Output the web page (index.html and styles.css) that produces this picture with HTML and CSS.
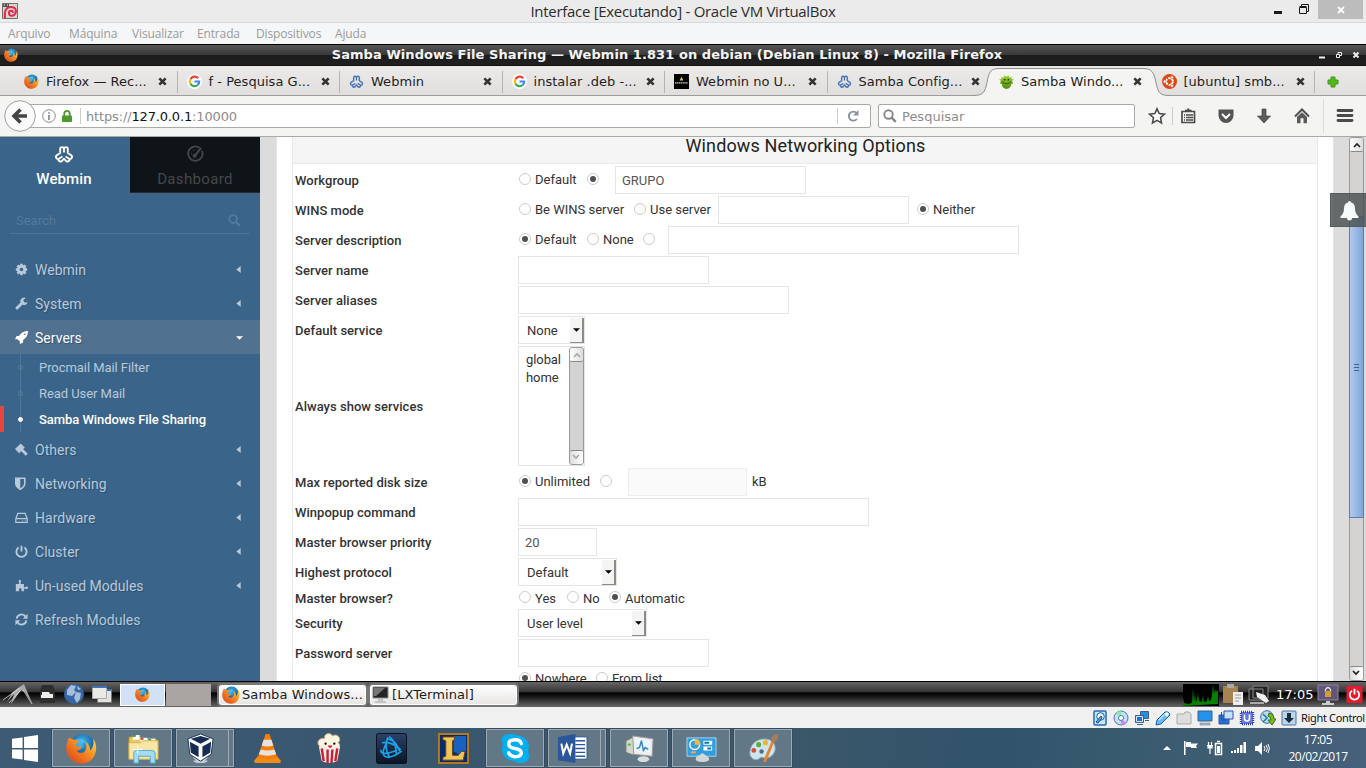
FILE: index.html
```html
<!DOCTYPE html>
<html lang="pt">
<head>
<meta charset="utf-8">
<title>Interface [Executando] - Oracle VM VirtualBox</title>
<link rel="stylesheet" href="styles.css">
</head>
<body>
<svg class="defs" width="0" height="0">
  <defs>
    <linearGradient id="orange" x1="1" y1="0" x2="0" y2="1"><stop offset="0" stop-color="#ffdc3e"/><stop offset=".5" stop-color="#f58220"/><stop offset="1" stop-color="#d53a1c"/></linearGradient>
    <radialGradient id="globe" cx=".5" cy=".3" r=".7"><stop offset="0" stop-color="#37b7ea"/><stop offset="1" stop-color="#10357e"/></radialGradient>
    <linearGradient id="green" x1="0" y1="0" x2="0" y2="1"><stop offset="0" stop-color="#a4d42c"/><stop offset="1" stop-color="#4c8c10"/></linearGradient>
    <linearGradient id="navy" x1="0" y1="0" x2="0" y2="1"><stop offset="0" stop-color="#2b4268"/><stop offset="1" stop-color="#0b1526"/></linearGradient>
  </defs>
  <symbol id="firefox" viewBox="0 0 32 32">
    <circle cx="17" cy="14" r="13" fill="url(#globe)"/>
    <path d="M10 7c3-2 8-2 10 2l-4 2 2 4-6 1-4-5z" fill="#67c9ef" opacity=".5"/>
    <path d="M3 5c-4 9-4 17 3 23 8 6 19 4 23-4 3-6 3-13-1-18 1 5 0 9-3 12 0-5-3-8-5-9 2 4 1 9-2 11-3 1-6 0-7-2 3 0 4-1 5-3-2-1-5 0-6-3 1-2 3-2 3-3-1-2-3-2-5-2C6 6 5 6 3 5z" fill="url(#orange)"/>
  </symbol>
  <symbol id="google" viewBox="0 0 16 16">
    <circle cx="8" cy="8" r="8" fill="#fff"/>
    <g fill="none" stroke-width="2.3"><path d="M12 4.500A5 5 0 0 0 3.700 5.600" stroke="#ea4335"/><path d="M3.700 5.600a5 5 0 0 0 0 4.800" stroke="#fbbc05"/><path d="M3.700 10.400a5 5 0 0 0 7.700 1.400" stroke="#34a853"/><path d="M11.400 11.800A5 5 0 0 0 13 8H8" stroke="#4285f4"/></g>
  </symbol>
  <symbol id="webmin" viewBox="0 0 20 18">
    <path d="M6.200 8V4a1.900 1.900 0 0 1 3.800 0 1.900 1.900 0 0 1 3.800 0v4l3.400 2.200a2.200 2.200 0 0 1-1.600 3.900 2.200 2.200 0 0 1-3.900 1.600L10 13.800l-1.700 1.900a2.200 2.200 0 0 1-3.900-1.600 2.200 2.200 0 0 1-1.600-3.900zM10 3.500v4M4.500 14l4-2.500M15.500 14l-4-2.500" fill="none" stroke="currentColor" stroke-width="1.900" stroke-linejoin="round"/>
  </symbol>
  <symbol id="close" viewBox="0 0 10 10"><path d="M1.500 1.500l7 7M8.500 1.500l-7 7" stroke="currentColor" stroke-width="2.900"/></symbol>
  <symbol id="search" viewBox="0 0 16 16"><circle cx="6.300" cy="6.300" r="4.800" fill="none" stroke="currentColor" stroke-width="2.200"/><path d="M9.600 9.600l5 5" stroke="currentColor" stroke-width="2.800"/></symbol>
  <symbol id="caret" viewBox="0 0 5 8"><path d="M5 0v8L0 4z" fill="currentColor"/></symbol>
  <symbol id="down" viewBox="0 0 8 4"><path d="M0 0h8L4 4z" fill="currentColor"/></symbol>
  <symbol id="chev" viewBox="0 0 8 6"><path d="M1 5l3-3 3 3" fill="none" stroke="currentColor" stroke-width="1.700"/></symbol>
</svg>

<header class="vm-title">
  <svg class="vm-logo" viewBox="0 0 16 16"><path fill="#ddd5ca" stroke="#746b65" d="M.5.5h15v15H.5z"/><path d="M3 15C2 8 4 4 9 4s6 4 4 7-6 2-6-1 4-3 4 0" fill="none" stroke="#df2854" stroke-width="2"/><path d="M1 1h6v3H1z" fill="#555"/><path d="M2 2h1m2 0h1" stroke="#fff"/></svg>
  <h1>Interface [Executando] - Oracle VM VirtualBox</h1>
  <div class="vm-controls">
    <svg width="8" height="3"><path fill="#1a1a1a" d="M0 0h8v3H0z"/></svg>
    <svg width="10" height="10" fill="none" stroke="#1a1a1a"><path d="M.5 3.500h7v6h-7zM.5 2.500h7M2.500 2V.5h7v7H8"/></svg>
    <span class="vm-close"><svg width="8" height="8"><path d="M1 1l6 6M7 1L1 7" stroke="#fff" stroke-width="1.800"/></svg></span>
  </div>
</header>
<nav class="vm-menu"><span>Arquivo</span><span>Máquina</span><span>Visualizar</span><span>Entrada</span><span>Dispositivos</span><span>Ajuda</span></nav>

<div class="ff-title">
  <svg class="ff-logo"><use href="#firefox"/></svg>
  <span class="ff-name">Samba Windows File Sharing — Webmin 1.831 on debian (Debian Linux 8) - Mozilla Firefox</span>
  <svg class="ff-controls" width="44" height="10" fill="none" stroke="#eee"><path d="M0 7.500h6" stroke-width="2"/><path d="M17.500 4.500h3v3h-3zM19 4V2.500h3.500v3H21"/><path d="M34.500 2.500l5 5m0-5l-5 5" stroke-width="2"/></svg>
</div>

<div class="tabs">
  <svg class="tab-shape" viewBox="0 0 196 30"><path d="M0 29.500c10 0 12-3 14-13C16 5 18 2.500 27 2.500h143c9 0 11 4 13 14 2 9 3 13 13 13v.5H0z" fill="#f4f4f2"/><path d="M0 29.500c10 0 12-3 14-13C16 5 18 2.500 27 2.500h143c9 0 11 4 13 14 2 9 3 13 13 13" fill="none" stroke="#8f8f8f"/></svg>
  <div class="tab"><svg class="fav"><use href="#firefox"/></svg><span>Firefox — Rec...</span><svg class="x"><use href="#close"/></svg></div>
  <div class="tab"><svg class="fav"><use href="#google"/></svg><span>f - Pesquisa G...</span><svg class="x"><use href="#close"/></svg></div>
  <div class="tab"><svg class="fav wm"><use href="#webmin"/></svg><span>Webmin</span><svg class="x"><use href="#close"/></svg></div>
  <div class="tab"><svg class="fav"><use href="#google"/></svg><span>instalar .deb -...</span><svg class="x"><use href="#close"/></svg></div>
  <div class="tab"><svg class="fav" viewBox="0 0 16 16"><path d="M0 0h16v16H0z"/><path d="M6 7l2-4 2 4z" fill="#f3c33a"/><path d="M1 9.500h14" stroke="#999" stroke-width="2" stroke-dasharray="1.500 .5"/></svg><span>Webmin no U...</span><svg class="x"><use href="#close"/></svg></div>
  <div class="tab plain"><svg class="fav wm"><use href="#webmin"/></svg><span>Samba Config...</span><svg class="x"><use href="#close"/></svg></div>
  <div class="tab plain"><svg class="fav" viewBox="0 0 16 16"><path d="M2 7L0 6l3-1-1-2 3 1 1-3 2 2 2-2 1 3 3-1-1 2 3 1-2 1 1 3-2 1c0 3-3 5-5 5s-5-2-5-5L1 10z" fill="url(#green)"/><path d="M3 8c3 3 7 3 10 0" fill="none" stroke="#274d0e"/><circle cx="6" cy="6" r="1" fill="#234d0b"/><circle cx="10" cy="6" r="1" fill="#234d0b"/></svg><span>Samba Windo...</span><svg class="x"><use href="#close"/></svg></div>
  <div class="tab"><svg class="fav" viewBox="0 0 16 16"><circle cx="8" cy="8" r="8" fill="#dd4814"/><circle cx="8" cy="8" r="3.600" fill="none" stroke="#fff" stroke-width="2" stroke-dasharray="6.500 1"/><g fill="#fff" stroke="#dd4814" stroke-width=".6"><circle cx="2.800" cy="8" r="1.600"/><circle cx="10.600" cy="3.500" r="1.600"/><circle cx="10.600" cy="12.500" r="1.600"/></g></svg><span>[ubuntu] smb...</span><svg class="x"><use href="#close"/></svg></div>
  <svg class="newtab" viewBox="0 0 12 12"><path d="M4 1h4v3h3v4H8v3H4V8H1V4h3z" fill="#54ba1c" stroke="#3f9612"/></svg>
</div>

<div class="navbar">
  <svg class="back" viewBox="0 0 32 32"><circle cx="16" cy="16" r="15.300" fill="#fafafa" stroke="#a0a0a0"/><path d="M16.500 9.500L10 16l6.500 6.500M11 16h12" fill="none" stroke="#444" stroke-width="3.600"/></svg>
  <div class="urlbar">
    <svg class="info" viewBox="0 0 14 14"><circle cx="7" cy="7" r="6.300" fill="none" stroke="#8a8a8a"/><path d="M7 6v5M7 3.200v1.600" stroke="#777" stroke-width="1.500"/></svg>
    <svg class="lock" viewBox="0 0 10 12"><path d="M2.300 6V3.600a2.700 2.700 0 0 1 5.400 0V6" fill="none" stroke="#4c9a2a" stroke-width="1.800"/><rect y="5.500" width="10" height="6.500" rx=".8" fill="#4c9a2a"/></svg>
    <i class="vsep"></i>
    <span class="url">https://<b>127.0.0.1</b>:10000</span>
    <i class="vsep"></i>
    <svg class="reload" viewBox="0 0 12 12"><path d="M9.700 3.200A4.500 4.500 0 1 0 9.800 9" fill="none" stroke="#8793a0" stroke-width="1.900"/><path d="M11.500 0v5.500H6z" fill="#8793a0"/></svg>
  </div>
  <div class="searchbox"><svg viewBox="0 0 16 16"><use href="#search"/></svg><span>Pesquisar</span></div>
  <div class="nav-icons">
    <svg viewBox="0 0 18 18" fill="#fff" stroke="#4c4c4c" stroke-width="1.600"><path d="M9 1.800l2.200 4.800 5.100.6-3.800 3.500 1 5.200L9 13.300l-4.500 2.600 1-5.200L1.700 7.200l5.100-.6z"/></svg>
    <i class="short-sep"></i>
    <svg viewBox="0 0 18 18"><path d="M3 4.500h12.500v11H3z" fill="none" stroke="#4c4c4c" stroke-width="1.700"/><path d="M6 5V2.700h1.800L9.200 1l1.600 1.700h1.800V5" fill="#4c4c4c"/><path d="M5 8h1m1 0h7M5 10.500h1m1 0h7M5 13h1m1 0h7" stroke="#4c4c4c" stroke-width="1.300"/></svg>
    <svg viewBox="0 0 18 18"><path d="M1.500 2.500h15v6a7.500 7.500 0 0 1-15 0z" fill="#555"/><path d="M5 7l4 4 4-4" fill="none" stroke="#fff" stroke-width="2"/></svg>
    <svg viewBox="0 0 18 18"><path d="M7 2h4v7h4.500L9 16 2.500 9H7z" fill="#5c5c5c" stroke="#444" stroke-width=".7"/></svg>
    <svg viewBox="0 0 18 18"><path d="M2 9.500l7-7 7 7" fill="none" stroke="#505050" stroke-width="2"/><path d="M4 10l5-4.800 5 4.800v6.300h-3.500v-5h-3v5H4z" fill="#5a5a5a"/></svg>
    <i class="tall-sep"></i>
    <svg viewBox="0 0 18 18"><path d="M2 3.500h14M2 8.500h14M2 13.500h14" stroke="#4a4a4a" stroke-width="2.800" stroke-linecap="round"/></svg>
  </div>
</div>

<main class="page">
  <aside class="side">
    <div class="side-tabs">
      <div class="side-tab on"><svg width="22" height="18"><use href="#webmin"/></svg><span>Webmin</span></div>
      <div class="side-tab off"><svg width="17" height="17" viewBox="0 0 17 17"><path d="M12.500 2.200A7.200 7.200 0 1 0 15 5.300" fill="none" stroke="#44484b" stroke-width="1.800"/><path d="M7.500 10.500l6.500-8" stroke="#44484b" stroke-width="2"/><circle cx="7.600" cy="10.300" r="2" fill="#44484b"/><path d="M4 8h1m1-3h1" stroke="#44484b"/></svg><span>Dashboard</span></div>
    </div>
    <div class="side-search"><span>Search</span><svg viewBox="0 0 16 16"><use href="#search"/></svg></div>
    <ul class="menu">
      <li><svg class="mi" viewBox="0 0 16 16"><circle cx="8" cy="8" r="4" fill="none" stroke="currentColor" stroke-width="3.600"/><path d="M8 1v3M8 12v3M1 8h3M12 8h3M3 3l2 2M11 11l2 2M13 3l-2 2M3 13l2-2" stroke="currentColor" stroke-width="3"/></svg><span>Webmin</span><svg class="ca"><use href="#caret"/></svg></li>
      <li><svg class="mi" viewBox="0 0 16 16"><path d="M2.500 13.500L9 7" stroke="currentColor" stroke-width="3.600" stroke-linecap="round"/><path d="M13.500 1.500a4.500 4.500 0 1 0 2 4.500l-3 1-2-1.500V3z" fill="currentColor"/></svg><span>System</span><svg class="ca"><use href="#caret"/></svg></li>
      <li class="open"><svg class="mi" viewBox="0 0 16 16"><path d="M16 0C10 0 7 3 5 6H2L0 10h3l3 3v3l4-2v-3c3-2 6-5 6-11z" fill="currentColor"/><circle cx="12" cy="4" r="1" fill="#50718f"/></svg><span>Servers</span><svg class="cd"><use href="#down"/></svg></li>
    </ul>
    <ul class="sub">
      <li><i></i>Procmail Mail Filter</li>
      <li><i></i>Read User Mail</li>
      <li class="now"><i></i>Samba Windows File Sharing</li>
    </ul>
    <ul class="menu">
      <li><svg class="mi" viewBox="0 0 16 16"><path d="M0 7.500l7-7 5 5-7 7z" fill="currentColor"/><path d="M8 8l6.500 6.500" stroke="currentColor" stroke-width="3.400"/></svg><span>Others</span><svg class="ca"><use href="#caret"/></svg></li>
      <li><svg class="mi" viewBox="0 0 16 16"><path d="M1 1.500h11v6.500c0 4-3 5.500-5.500 7C4 13.500 1 12 1 8z" fill="none" stroke="currentColor" stroke-width="2"/><path d="M1 1.500h5.500V15C3 13 1 12 1 8z" fill="currentColor"/></svg><span>Networking</span><svg class="ca"><use href="#caret"/></svg></li>
      <li><svg class="mi" viewBox="0 0 16 16"><path d="M1 9.500L3.500 3h9L15 9.500V14H1zM1 9.500h14M9 12h1m2 0h1" fill="none" stroke="currentColor" stroke-width="1.500"/></svg><span>Hardware</span><svg class="ca"><use href="#caret"/></svg></li>
      <li><svg class="mi" viewBox="0 0 16 16"><path d="M4.500 3a6.300 6.300 0 1 0 7 0M8 1v7" fill="none" stroke="currentColor" stroke-width="2.300"/></svg><span>Cluster</span><svg class="ca"><use href="#caret"/></svg></li>
      <li><svg class="mi" viewBox="0 0 16 16"><path d="M1 6h4V4c-1-2 0-3 1-3s2 1 1 3v2h4v4h2c1-1 3-1 3 .7S14 13 13 12h-2v3H8v-2c0-2-3-2-3 0v2H1z" fill="currentColor"/></svg><span>Un-used Modules</span><svg class="ca"><use href="#caret"/></svg></li>
      <li><svg class="mi" viewBox="0 0 16 16"><path d="M2 7a6 6 0 0 1 11-2.500M14 9a6 6 0 0 1-11 2.500" fill="none" stroke="currentColor" stroke-width="2.300"/><path d="M15.500 1v6h-6zM.5 15V9h6z" fill="currentColor"/></svg><span>Refresh Modules</span></li>
    </ul>
  </aside>
  <section class="panel">
    <div class="form">
      <h2>Windows Networking Options</h2>
      <div class="row"><label>Workgroup</label><div><i class="r"></i><span class="w56">Default</span><i class="r on"></i><input class="f191 g16" value="GRUPO"></div></div>
      <div class="row"><label>WINS mode</label><div><i class="r"></i><span class="w103">Be WINS server</span><i class="r"></i><span class="w72">Use server</span><input class="f191"><i class="r on g8"></i><span>Neither</span></div></div>
      <div class="row"><label>Server description</label><div><i class="r on"></i><span class="w56">Default</span><i class="r"></i><span class="w44">None</span><i class="r"></i><input class="f351 g13"></div></div>
      <div class="row"><label>Server name</label><div><input class="f191"></div></div>
      <div class="row"><label>Server aliases</label><div><input class="f271"></div></div>
      <div class="row"><label>Default service</label><div><span class="select s67">None<b><svg><use href="#down"/></svg></b></span></div></div>
      <div class="row tall"><label>Always show services</label><div><div class="list"><div class="opts">global<br>home</div><div class="bar"><b><svg><use href="#chev"/></svg></b><b class="flip"><svg><use href="#chev"/></svg></b></div></div></div></div>
      <div class="row"><label>Max reported disk size</label><div><i class="r on"></i><span class="w69">Unlimited</span><i class="r"></i><input class="f119 g16 dis" disabled><span class="kb">kB</span></div></div>
      <div class="row"><label>Winpopup command</label><div><input class="f351"></div></div>
      <div class="row"><label>Master browser priority</label><div><input class="f79" value="20"></div></div>
      <div class="row"><label>Highest protocol</label><div><span class="select s98">Default<b><svg><use href="#down"/></svg></b></span></div></div>
      <div class="row short"><label>Master browser?</label><div><i class="r"></i><span class="w36">Yes</span><i class="r"></i><span class="w30">No</span><i class="r on"></i><span>Automatic</span></div></div>
      <div class="row"><label>Security</label><div><span class="select s128">User level<b><svg><use href="#down"/></svg></b></span></div></div>
      <div class="row"><label>Password server</label><div><input class="f191"></div></div>
      <div class="row short last"><label></label><div><i class="r on"></i><span class="w65">Nowhere</span><i class="r"></i><span>From list</span></div></div>
    </div>
  </section>
  <div class="scroll">
    <b><svg><use href="#chev"/></svg></b>
    <div class="track"><div class="thumb"><i></i></div></div>
    <b class="flip"><svg><use href="#chev"/></svg></b>
  </div>
  <div class="bell"><svg width="19" height="20" viewBox="0 0 19 20"><path d="M9.500 0c1 0 1.500.8 1.500 1.500 3 .8 4 3 4 6 0 4 1.500 6 3.500 8V17H12a2.500 2.500 0 0 1-5 0H.5v-1.500C2.500 13.500 4 11.500 4 7.500c0-3 1-5.200 4-6C8 .8 8.500 0 9.500 0z" fill="#f7fafa"/></svg></div>
</main>

<div class="lx">
  <div class="lx-launch">
    <svg width="36" height="24"><path d="M3 17L18 5l6-4 2 5 7 16-8-13-4-2-10 14 3-10-7 8 5-9z" fill="#a9a9a9"/><path d="M3 17L20 5m3 2l9 14M9 20l12-13" stroke="#eee" fill="none" stroke-width=".7"/></svg>
    <svg width="26" height="24"><path d="M4 8l2-6h11l2 6v12H4z" fill="#2e2e2e"/><path d="M5 14v-2h1V9h7l1 2h3v4H5z" fill="#eee"/></svg>
    <svg width="26" height="24"><circle cx="12" cy="11" r="10" fill="#3566a5"/><path d="M5 7l4-5 5 1-2 4 2 2-4 4-5-1zM14 9l5 1-1 6-3 4-3-5zM15 3l4 3-3 1z" fill="#a6bedb"/></svg>
    <svg width="32" height="24"><path d="M9.500 6.500h14v13h-14z" fill="#e2e2de" stroke="#777"/><path d="M10 7h13" stroke="#3f72b6" stroke-width="2"/><path d="M4.500 3.500h14v12h-14z" fill="#e9e9e5" stroke="#aaa"/><path d="M4 4h15" stroke="#3f72b6" stroke-width="2"/></svg>
  </div>
  <div class="pager"><span class="cur"><svg width="15" height="15"><use href="#firefox"/></svg></span><span></span></div>
  <div class="task t1"><svg width="18" height="18"><use href="#firefox"/></svg><span>Samba Windows...</span></div>
  <div class="task t2"><svg width="17" height="17" viewBox="0 0 17 17"><path d="M1 1h15v11H1z" fill="#252525" stroke="#888"/><path d="M2 2h11L4 10H2z" fill="#777"/><path d="M6 13h5v2h3v2H3v-2h3z" fill="#c4c4c4"/></svg><span>[LXTerminal]</span></div>
  <div class="lx-tray">
    <svg width="36" height="22"><path d="M0 0h36v22H0z"/><path d="M0 22v-8l1 5 4 1 4-1 1-15 1 14 1-9 1 9 1-2 1-7 1 8 3 1 1-7 1 7 3-1 1-5 1 5 2-1 1-5 1-11 1 10 1-5 1 3 2-2v14z" fill="#078000"/></svg>
    <svg width="26" height="22" viewBox="0 0 26 22"><path d="M2 2h15v17H2z" fill="#a98252"/><path d="M6 0h7v4H6z" fill="#aaa"/><path d="M12 8h10v13H12z" fill="#eee"/><path d="M14 11h6m-6 3h6m-6 3h4" stroke="#999"/></svg>
    <svg width="28" height="22" viewBox="0 0 28 22"><path d="M6 2h15v12H6zM2 5h14v11H2z" fill="#222" stroke="#888"/><path d="M9 8l9 3 4 6-3 2-9-6z" fill="#f2f2f2"/><path d="M3 19h14" stroke="#aaa" stroke-width="2"/></svg>
    <span>17:05</span>
    <svg class="lx-lock" width="22" height="22" viewBox="0 0 22 22"><path d="M1 1h20v15H1z" fill="#625579" stroke="#8e88a3"/><path d="M8.500 8V5.500q2.500-4 5 0V8" fill="none" stroke="#ddd" stroke-width="1.300"/><path d="M8 7h6v6H8z" fill="#cf9e34"/><path d="M9 17h4v2h4v2H5v-2h4z" fill="#ccc"/></svg>
    <svg class="lx-power" width="17" height="17" viewBox="0 0 17 18"><rect width="17" height="18" rx="1" fill="#e31c2d"/><path d="M6 5a5 5 0 1 0 5 0M8.500 3v6" fill="none" stroke="#fff" stroke-width="1.900"/></svg>
  </div>
</div>

<div class="vm-status">
  <svg viewBox="0 0 16 16"><rect x="2" y="1" width="12" height="14" rx="1" fill="#c8e7fb" stroke="#216ab6" stroke-width="1.500"/><circle cx="8.500" cy="6.500" r="3.800" fill="#e6f4ff" stroke="#2160a8"/><path d="M9 6l-5 6 2 1 4-5z" fill="#5ba9e6" stroke="#174c8b"/></svg>
  <svg viewBox="0 0 16 16"><circle cx="8" cy="8" r="7" fill="#c8defa" stroke="#4774bd"/><path d="M8 8L3 3a7 7 0 0 1 5-2z" fill="#88ed9d"/><path d="M8 8l5 5a7 7 0 0 1-5 2z" fill="#c989ed"/><circle cx="8" cy="8" r="2.500" fill="#fff" stroke="#4774bd"/></svg>
  <svg viewBox="0 0 16 16"><path d="M6.500 1.500h8v7h-8z" fill="#238ee6" stroke="#475d80"/><path d="M1.500 5.500h8v7h-8z" fill="#1673dc" stroke="#475d80"/><path d="M2.500 6.500h6v5h-6z" fill="none" stroke="#dce9f4"/><path d="M3 14.500h6M11 10.500h4" stroke="#475d80"/></svg>
  <svg viewBox="0 0 16 16"><path d="M1 15l1-5 8-8q4-1 5 3l-9 9z" fill="#69b9ef" stroke="#1c5da6"/><path d="M9 4l3 3 2-3-2-2z" fill="#f4faff"/><path d="M4 10l5-5" stroke="#c1e8ff" stroke-width="1.500"/></svg>
  <svg viewBox="0 0 16 16"><path d="M1 4h7l1-2h4l2 2v10H1z" fill="#ddd" stroke="#aaa"/></svg>
  <svg viewBox="0 0 16 16"><path d="M1 1h14v10H1z" fill="#2491ed" stroke="#475f86"/><path d="M3 13h10v2H3z" fill="#aeb9ca" stroke="#61708a" stroke-width=".5"/></svg>
  <svg viewBox="0 0 16 16"><path d="M1 5h10v9H1z" fill="#1e74da" stroke="#47567f"/><path d="M6 1h9v8H6z" fill="#c3e0ff" stroke="#3151a2"/><path d="M3.500 2v8h4" fill="none" stroke="#2f4da5"/></svg>
  <svg viewBox="0 0 16 16"><rect x="2" y="2" width="12" height="12" fill="#7180df" stroke="#3344a5" stroke-width="2.500" stroke-dasharray="1 1"/><rect x="3" y="3" width="10" height="10" fill="#6878da"/><path d="M5.500 4.500v4q0 2.500 2.500 2.500t2.500-2.500v-4" fill="none" stroke="#fff" stroke-width="1.600"/></svg>
  <svg viewBox="0 0 16 16"><circle cx="7" cy="7" r="6.300" fill="#b9def2" stroke="#356e9e"/><path d="M9 3q5 1 5 6h2l-4 6-4-5h3q0-3-3-4z" fill="#76bd23" stroke="#416c12"/><path d="M3 4l4 4-4 4" fill="none" stroke="#267d9f" stroke-width="1.600"/></svg>
  <svg viewBox="0 0 16 16"><rect x="1" y="1" width="14" height="14" rx="1" fill="#bad6e8" stroke="#4776a5"/><path d="M6 3h4v5h3l-5 5-5-5h3z" fill="#1b2d40"/></svg>
  <span>Right Control</span>
</div>

<footer class="win">
  <svg class="start" viewBox="0 0 28 28"><path d="M0 4l11-1.500v11H0zM12.500 2L27 0v13.500H12.500zM0 15h11v10.500L0 24zM12.500 15H27v13l-14.500-2.200z" fill="#fff"/></svg>
  <div class="apps">
    <div class="app box"><svg viewBox="0 0 32 32"><use href="#firefox"/></svg></div>
    <div class="app box"><svg viewBox="0 0 32 32"><path d="M1 4h11l2 2h15v20H1z" fill="#e9c865" stroke="#b58f32"/><path d="M5 2h7v5H5zM13 5h7v5h-7zM21 6h7v4h-7z" fill="#fff"/><path d="M5 3h3" stroke="#28a13c" stroke-width="2"/><path d="M13 6h3" stroke="#c8402f" stroke-width="2"/><path d="M21 7h3" stroke="#2786ba" stroke-width="2"/><path d="M1 10h12l2-2h16v19H1z" fill="#f8e6a4" stroke="#d7b655"/><path d="M6 31V20q0-2 3-2h15q4 0 4 3v10h-5v-7H11v7z" fill="#a3dcef" stroke="#56a7ca"/><path d="M10 12v9M5 17h10" stroke="#fff"/></svg></div>
    <div class="app box multi"><svg viewBox="0 0 32 32"><path d="M8 25h16l-3 3 3 1-4 2h-8l-4-2 3-1z" fill="#c1cbd6"/><path d="M3 6L16 1l13 5-2 16-11 7-11-7z" fill="#fff" stroke="#1c3557"/><path d="M6 6l10-3 10 3-10 5zM5 9l9 5v11l-8-5zM18 14l9-5-1 11-8 5z" fill="#152c53"/></svg></div>
    <div class="app"><svg viewBox="0 0 32 32"><path d="M6 24h20l4 5-1 2H3l-1-2z" fill="#f18a16"/><path d="M14 1h4l8 24q-10 4-20 0z" fill="#f57e0a"/><path d="M12 7h8l2 6q-6 2-12 0zM9 17q7 2 14 0l2 5q-9 3-18 0z" fill="#e7e4df"/></svg></div>
    <div class="app"><svg viewBox="0 0 32 32"><path d="M6 14C1 9 7 4 11 6c-1-6 6-7 8-3 5-3 10 3 6 7 3 3 1 5-1 6H8z" fill="#fff4de" stroke="#caad91"/><path d="M5 14h22l-3 15q-8 4-16 0z" fill="#f6ece8"/><path d="M8 16l2 13M14 17v14M19 17l-1 14M24 16l-2 13" stroke="#cb1e32" stroke-width="2.500"/><path d="M14 13h5q-2 5-5 0" fill="#c51d2f"/><circle cx="12" cy="11" r="1.200"/><circle cx="21" cy="11" r="1.200"/></svg></div>
    <div class="app"><svg viewBox="0 0 32 32"><rect x=".5" y=".5" width="31" height="31" rx="2" fill="url(#navy)" stroke="#071322"/><path d="M12 6q8 1 12 12M14 4q6 4 7 17M10 12q-6 12 2 13 6 0 14-6M7 10q8-2 18 7M12 5q-4 10 2 20M5 18q0 6 16 0" fill="none" stroke="#19a4e8" stroke-width="1.700" stroke-linecap="round"/></svg></div>
    <div class="app"><svg viewBox="0 0 32 32"><path d="M1 1h30v30H1z" fill="#0a2b66" stroke="#b27922" stroke-width="2"/><path d="M16 3h13v15l-6 5-7-4z" fill="#1762bf"/><path d="M5 4h12v3l-2 1v15h6l3-4h4l-2 9H5v-3l3-1V8L5 7z" fill="#edc65a" stroke="#684018"/></svg></div>
    <div class="app box"><svg viewBox="0 0 32 32"><path d="M9 1q4-1 7 1 11 0 14 11l-1 6q4 11-8 12-4 0-6-2Q3 28 2 17q0-3 1-5Q-1 2 9 1z" fill="#00aff0"/><path d="M22 11q-1-4-6-4-7 0-7 4.500C9 18 22 14 22 20.500q0 4-6 4-5 0-7-4" fill="none" stroke="#fff" stroke-width="3.600" stroke-linecap="round"/></svg></div>
    <div class="app box multi"><svg viewBox="0 0 32 32"><path d="M14 4h17v23H14z" fill="#fff" stroke="#2b579a"/><path d="M19 8h10m-10 4h10m-10 4h10m-10 4h10m-10 4h10" stroke="#2b579a" stroke-width="1.500"/><path d="M1 4l18-3v30L1 28z" fill="#2b579a"/><path d="M4.500 11l2 10L10 12l3.500 9 2-10" fill="none" stroke="#fff" stroke-width="2.100"/></svg></div>
    <div class="app box"><svg viewBox="0 0 32 32"><path d="M2 8l8-4v19l-8-3z" fill="#d5d5cf" stroke="#777"/><path d="M9 3l21 3-1 18-19-2z" fill="#eee" stroke="#999"/><path d="M12 6l15 2-1 13-13-2z" fill="#e7f7fc"/><path d="M13 16l3-1 2-7 2 10 2-3 3 2" fill="none" stroke="#3c80bd" stroke-width="1.500"/><ellipse cx="20" cy="27" rx="6" ry="3" fill="#d9dddd"/><path d="M4 12h3" stroke="#39c82c" stroke-width="2"/></svg></div>
    <div class="app box"><svg viewBox="0 0 32 32"><path d="M1 5h30v19H1z" fill="#329ede" stroke="#9ed4f2"/><circle cx="9" cy="12" r="5" fill="none" stroke="#fff" stroke-width="1.500"/><path d="M9 12V6q6 1 6 6z" fill="#ffb437"/><path d="M18 10h9m-9 6h9" stroke="#fff" stroke-width="4"/><path d="M19 10h5m-2 6h4" stroke="#1773a9" stroke-width="2"/><path d="M5 20h5" stroke="#ffac30" stroke-width="2"/><path d="M10 28q0-5 4-5 3-4 6 0 4 1 4 5-7 4-14 0z" fill="#d2d6d8"/></svg></div>
    <div class="app box"><svg viewBox="0 0 32 32"><path d="M2 19C3 9 13 4 22 7c9 4 7 15 0 18-5 3-7-2-10 1-4 4-11 0-10-7z" fill="#cfe4ef" stroke="#8baab9"/><circle cx="6" cy="18" r="2.500" fill="#d64e40"/><circle cx="11" cy="12" r="2.600" fill="#5dac34"/><circle cx="18" cy="10" r="2.700" fill="#edb52b"/><circle cx="14" cy="19" r="2.300" fill="#526f82"/><path d="M26 8l-9 22" stroke="#e28632" stroke-width="3"/><path d="M24 9q-1-8 7-8 1 6-4 9z" fill="#a87c58"/></svg></div>
  </div>
  <div class="tray">
    <svg width="8" height="4"><path d="M0 4l4-4 4 4z" fill="#fff"/></svg>
    <svg width="16" height="16" fill="#fff"><path d="M1 1h1.500v14H1zM3 2h5v1.500h7l-2 2.500 1 2H8V7H3z"/></svg>
    <svg width="16" height="16"><path d="M1.500 2v3M4.500 2v3M0 5.500h6M1 6h4v2H1zM3 8v6" fill="#fff" stroke="#fff" stroke-width="1.200"/><path d="M8.500 3.500h6v11h-6zM10 1.500h3" fill="none" stroke="#fff" stroke-width="1.500"/><path d="M10 6h3v7h-3z" fill="#fff"/></svg>
    <svg width="16" height="12" fill="#fff"><path d="M0 9h2v2H0zM3 8h2v3H3zM6 6h2v5H6zM9 3h2.500v8H9zM12.500 0H15v11h-2.500z"/></svg>
    <svg width="16" height="15"><path d="M0 5h3l4-4v13L3 10H0z" fill="#fff"/><path d="M9 5q2 3 0 5M11 4q3 3 0 7M13 3q3 4 0 9" fill="none" stroke="#fff"/></svg>
  </div>
  <div class="clock">17:05<br><span>20/02/2017</span></div>
</footer>
</body>
</html>
```

FILE: styles.css
```css
* { box-sizing: border-box; }
html, body { margin: 0; height: 768px; overflow: hidden; }
body { width: 1366px; font-family: Roboto, sans-serif; display: flex; flex-direction: column; background: #f4f4f2; }
body > * { flex-shrink: 0; }
svg { flex-shrink: 0; }
.defs { position: absolute; }
ul { list-style: none; margin: 0; padding: 0; }
i { font-style: normal; }

.vm-title { position: relative; height: 23px; background: #ebebeb; border-bottom: 1px solid #d6d9dc; display: flex; justify-content: center; align-items: center; }
.vm-title h1 { margin: 0; font: 15px/22px "Open Sans", sans-serif; letter-spacing: -.3px; color: #2b2b2b; white-space: nowrap; }
.vm-logo { position: absolute; left: 2px; top: 3px; width: 16px; height: 16px; }
.vm-controls { position: absolute; right: 3px; top: 0; display: flex; align-items: flex-start; }
.vm-controls > svg:first-child { margin: 11px 17px 0 0; }
.vm-controls > svg:nth-child(2) { margin: 4px 9px 0 0; }
.vm-close { width: 45px; height: 19px; background: #bcbcbc; display: flex; align-items: center; justify-content: center; }
.vm-menu { height: 21px; padding-left: 8px; background: #f5f6f7; display: flex; font: 12px/22px "Open Sans", sans-serif; letter-spacing: -.15px; color: #9b9b9b; }
.vm-menu span { width: 61px; }
.vm-menu span:nth-child(2) { width: 63px; }
.vm-menu span:nth-child(3) { width: 65px; }
.vm-menu span:nth-child(4) { width: 59px; }
.vm-menu span:nth-child(5) { width: 79px; }

.ff-title { position: relative; height: 22px; border-top: 1px solid #000; border-bottom: 1px solid #111; background: linear-gradient(#565656, #3a3a3a 48%, #1c1c1c 50%, #202020); display: flex; justify-content: center; }
.ff-name { font: bold 13px/20px "DejaVu Sans", sans-serif; letter-spacing: .07px; color: #f4f4f4; white-space: nowrap; padding-right: 32px; }
.ff-logo { position: absolute; left: 4px; top: 3px; width: 14px; height: 14px; }
.ff-controls { position: absolute; left: 1319px; top: 5px; }

.tabs { position: relative; height: 30px; padding-left: 15px; background: linear-gradient(#eceae9, #e1dfdd); border-bottom: 1px solid #9c9c9c; display: flex; font: 13px/31px "DejaVu Sans", sans-serif; color: #1e1e1e; }
.tab-shape { position: absolute; left: 973px; top: 0; width: 196px; height: 30px; }
.tab { position: relative; width: 162.500px; height: 30px; padding-left: 9px; display: flex; align-items: center; white-space: nowrap; }
.tab::after { content: ""; position: absolute; right: 0; top: 5px; width: 1px; height: 22px; background: #b6b4b2; }
.tab.plain::after { display: none; }
.tab span { width: 112px; margin-left: 7px; letter-spacing: .03px; }
.fav { width: 15px; height: 15px; margin-top: 1px; }
.fav.wm { color: #4773b8; }
.x { width: 9px; height: 9px; color: #333; margin-top: 1px; }
.newtab { width: 12px; height: 12px; margin: 10px 0 0 12px; }

.navbar { height: 41px; border-bottom: 1px solid #aaa; background: #f4f4f2; display: flex; align-items: center; font: 13px "DejaVu Sans", sans-serif; }
.back { width: 32px; height: 32px; margin-left: 4px; position: relative; z-index: 1; }
.urlbar { width: 843px; height: 24px; margin-left: -8px; padding-left: 13px; background: #fff; border: 1px solid #a9a9a5; border-radius: 0 2px 2px 0; display: flex; align-items: center; color: #8c8c8c; flex-shrink: 0; }
.urlbar b { font-weight: 400; color: #111; }
.info { width: 14px; height: 14px; margin-right: 6px; }
.lock { width: 10px; height: 12px; margin-right: 8px; }
.vsep { width: 1px; height: 16px; background: #ccc; flex-shrink: 0; }
.url { width: 751px; margin-left: 5px; letter-spacing: -.15px; flex-shrink: 0; }
.reload { width: 12px; height: 12px; margin-left: 9px; }
.searchbox { width: 257px; height: 24px; margin-left: 7px; padding-left: 4px; background: #fff; border: 1px solid #a9a9a5; border-radius: 2px; display: flex; align-items: center; gap: 5px; color: #8c8c8c; flex-shrink: 0; }
.searchbox svg { width: 14px; height: 14px; color: #888; }
.nav-icons { display: flex; align-items: center; margin-left: 13px; }
.nav-icons svg { width: 18px; height: 18px; margin-right: 20px; }
.nav-icons svg:first-child { margin-right: 6px; }
.nav-icons svg:last-child { margin-right: 0; }
.short-sep { width: 1px; height: 18px; margin-right: 6px; background: #ccc; }
.tall-sep { width: 1px; height: 34px; margin: 0 12px 0 -8px; background: #dcdcdc; }

.page { position: relative; height: 544px; overflow: hidden; display: flex; background: #dcdcdc; }
.side { width: 260px; background: #3a6489; color: #b8c9da; }
.side-tabs { height: 56px; display: flex; }
.side-tab { width: 130px; height: 56px; display: flex; flex-direction: column; align-items: center; font-size: 15px; letter-spacing: .35px; }
.side-tab svg { margin-top: 8px; height: 18px; }
.side-tab.on { color: #fff; font-weight: 500; letter-spacing: .1px; padding-right: 2px; }
.side-tab.on span { margin-top: 7px; }
.side-tab.off { background: #0f1418; color: #44484b; border-bottom: 1px solid #282b2e; }
.side-tab.off span { margin-top: 7px; }
.side-search { width: 240px; height: 26px; margin: 15px 10px 18px; padding: 0 9px 0 6px; border-bottom: 1px solid #4b7399; display: flex; align-items: center; justify-content: space-between; font-size: 13px; letter-spacing: 0; color: #55799f; }
.side-search svg { width: 13px; height: 13px; }
.menu li { height: 34px; padding: 1px 19px 0 15px; display: flex; align-items: center; font-size: 14px; letter-spacing: .02px; text-shadow: 1px 1px 1px #2e5071; }
.menu li span { flex: 1; }
.mi { width: 13px; height: 13px; margin-right: 7px; }
.ca { width: 5px; height: 7px; }
.cd { width: 7px; height: 4px; margin-right: -2px; }
.menu .open { background: #50718f; color: #fff; }
.sub { position: relative; }
.sub::before { content: ""; position: absolute; left: 20px; top: 0; height: 78px; width: 1px; background: #517596; }
.sub li { height: 26px; padding-left: 18px; display: flex; align-items: center; font-size: 13px; letter-spacing: -.06px; }
.sub li i { width: 5px; height: 5px; margin-right: 16px; border: 1px solid #597d9c; border-radius: 50%; position: relative; }
.sub .now { border-left: 4px solid #e8453f; padding-left: 14px; color: #fff; font-weight: 500; }
.sub .now i { background: #fff; border-color: #fff; }

.panel { width: 1056px; margin-left: 17px; padding-left: 15px; background: #fff; box-shadow: 0 0 2px #eee; }
.form { width: 1026px; height: 560px; border: solid #e9e9e9; border-width: 0 1px; color: #333; font-size: 13px; }
.form h2 { margin: 0 0 1px; height: 27px; background: #f5f5f5; border-bottom: 1px solid #ebebeb; padding-left: 1px; text-align: center; font: 400 18px/18px Roboto, sans-serif; letter-spacing: .14px; color: #222; }
.row { height: 30px; padding-left: 2px; display: flex; align-items: center; }
.row label { width: 223px; font-weight: 500; letter-spacing: .03px; padding-top: 1px; }
.row > div { display: flex; align-items: center; }
.row > div > span { position: relative; top: -.5px; }
.row.tall { height: 122px; }
.row.short { height: 21px; }
.row.short:not(.last) > div > span { top: .5px; }
.row.last { height: 22px; }
.r { width: 12px; height: 12px; margin: -2px 4px 0 1px; border: 1px solid #ccc; border-radius: 50%; background: #fff; display: flex; align-items: center; justify-content: center; }
.r.on::after { content: ""; width: 6px; height: 6px; border-radius: 50%; background: #505050; }
input { height: 28px; padding: 1px 6px 0; border: 1px solid #e5e5e5; background: #fff; font: 13px Roboto, sans-serif; color: #555; outline: 0; }
input.dis { background: #fafafa; border-color: #eee; }
.g16 { margin-left: 12px; }
.g13 { margin-left: 9px; }
.r.g8 { margin-left: 8px; }
.w56 { width: 51px; } .w103 { width: 98px; } .w72 { width: 68px; } .w44 { width: 39px; }
.w69 { width: 64px; } .w36 { width: 31px; } .w30 { width: 25px; } .w65 { width: 60px; }
.kb { margin-left: 5px; }
.f191 { width: 191px; } .f351 { width: 351px; } .f271 { width: 271px; } .f119 { width: 119px; } .f79 { width: 79px; }
.select { height: 28px; padding: 1px 0 0 8px; border: 1px solid #e5e5e5; display: flex; align-items: center; justify-content: space-between; color: #333; }
.row > div > .select { top: 0; }
.select b { width: 14px; height: 25px; background: #f4f4f2; border-right: 2px solid #8b8b88; border-bottom: 1px solid #8b8b88; display: flex; align-items: center; justify-content: center; }
.select svg { width: 7px; height: 4px; color: #000; }
.s67 { width: 67px; } .s98 { width: 99px; } .s128 { width: 129px; }
.list { width: 67px; height: 120px; border: 1px solid #e5e5e5; display: flex; line-height: 18px; letter-spacing: -.08px; }
.opts { width: 50px; padding: 4px 0 0 7px; }
.bar { width: 15px; background: #d5d3d1; border: 1px solid #999; border-radius: 3px; display: flex; flex-direction: column; justify-content: space-between; }
.bar b, .scroll b { height: 14px; background: linear-gradient(90deg, #fff, #ddd); border-bottom: 1px solid #888; border-radius: 2px; display: flex; align-items: center; justify-content: center; }
.bar svg, .scroll b svg { width: 8px; height: 6px; color: #aaa; }
.flip { transform: rotate(180deg); }

.scroll { width: 15px; margin-left: 16px; border: 1px solid #999; border-radius: 3px; background: #d5d3d1; display: flex; flex-direction: column; }
.scroll b svg { color: #222; }
.track { flex: 1; padding-top: 64px; }
.thumb { height: 302px; margin: 0 -1px; border: 1px solid #5a7fae; background: linear-gradient(90deg, #b0cbee, #80a5d6); display: flex; align-items: center; justify-content: center; }
.thumb i { width: 5px; height: 7px; background: repeating-linear-gradient(#41648f 0 1px, transparent 1px 3px); }
.bell { position: absolute; right: 0; top: 56px; width: 36px; height: 34px; border: 1px solid #555c5d; border-right: 0; background: rgba(73,80,80,.82); display: flex; align-items: center; justify-content: center; padding: 2px 0 0 2px; }

.lx { height: 26px; border-top: 1px solid #000; background: linear-gradient(#666, #333 40%, #000 43%, #111 55%, #666); display: flex; align-items: center; font: 13px "DejaVu Sans", sans-serif; }
.lx-launch { width: 120px; display: flex; }
.pager { width: 97px; display: flex; }
.pager span { width: 45px; height: 22px; background: #aaa5a2; display: flex; align-items: center; justify-content: center; margin-right: 1px; }
.pager .cur { background: #d1e1f8; border: 1px solid #fff; }
.task { width: 151px; height: 24px; border: 2px solid #777; border-radius: 5px; background: linear-gradient(#fff, #e5e4e2); display: flex; align-items: center; gap: 2px; color: #1b1b1b; white-space: nowrap; box-shadow: inset 0 0 0 1px #fff; letter-spacing: .08px; }
.task.t1 { padding-left: 3px; }
.task.t2 { gap: 3px; padding-left: 2px; }
.lx-tray { margin-left: auto; display: flex; align-items: center; color: #fff; padding-right: 3px; }
.lx-tray svg:nth-child(2) { margin-left: 2px; }
.lx-tray span { width: 38px; margin-left: 1px; }
.lx-lock { margin-left: 3px; }
.lx-power { margin-left: 7px; }

.vm-status { height: 21px; background: #f0f0f0; display: flex; align-items: center; justify-content: flex-end; font: 11px "Noto Sans", sans-serif; color: #111; }
.vm-status svg { width: 16px; height: 16px; margin-right: 5px; }
.vm-status span { width: 65px; margin-left: -1px; letter-spacing: -.34px; white-space: nowrap; }

.win { height: 40px; background: linear-gradient(100deg, #3d5b74 0, #38566d 30%, #3d5869 55%, #31536b 72%, #3b5c70 85%, #47607b); display: flex; align-items: center; }
.start { width: 27px; height: 27px; margin-left: 12px; }
.apps { margin-left: 13px; display: flex; gap: 4px; }
.app { position: relative; width: 58px; height: 38px; display: flex; align-items: center; justify-content: center; }
.app svg { width: 31px; height: 31px; }
.box { background: #637887; border: 1px solid #9caab5; box-shadow: 0 0 0 1px #344b5d; }
.multi { padding-right: 9px; }
.multi::after { content: ""; position: absolute; right: 4px; top: 0; width: 1px; height: 36px; background: #9caab5; }
.tray { margin-left: auto; display: flex; align-items: center; gap: 8px; }
.tray svg:first-child { margin-right: 4px; }
.clock { width: 62px; margin: 0 17px 0 16px; color: #fff; text-align: center; font: 12px/17px "Open Sans", sans-serif; letter-spacing: -.45px; white-space: nowrap; }
```
